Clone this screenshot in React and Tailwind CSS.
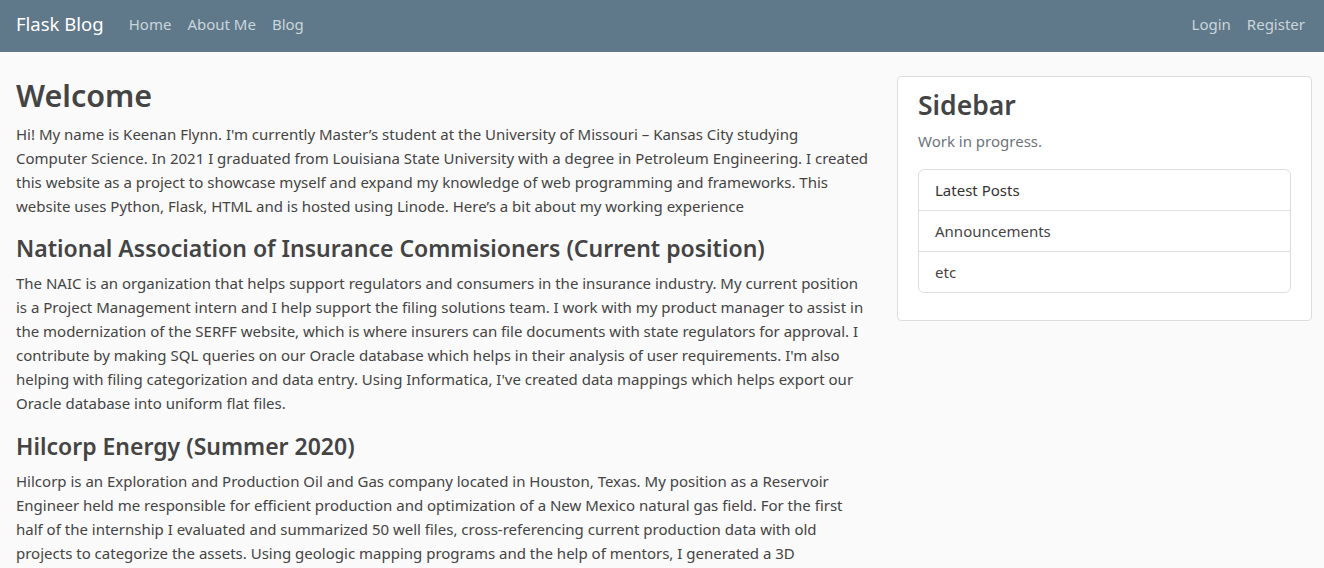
import React from "react";

const intro = [
  "Hi! My name is Keenan Flynn. I'm currently Master’s student at the University of Missouri – Kansas City studying",
  "Computer Science. In 2021 I graduated from Louisiana State University with a degree in Petroleum Engineering. I created",
  "this website as a project to showcase myself and expand my knowledge of web programming and frameworks. This",
  "website uses Python, Flask, HTML and is hosted using Linode. Here’s a bit about my working experience",
];

const naic = [
  "The NAIC is an organization that helps support regulators and consumers in the insurance industry. My current position",
  "is a Project Management intern and I help support the filing solutions team. I work with my product manager to assist in",
  "the modernization of the SERFF website, which is where insurers can file documents with state regulators for approval. I",
  "contribute by making SQL queries on our Oracle database which helps in their analysis of user requirements. I'm also",
  "helping with filing categorization and data entry. Using Informatica, I've created data mappings which helps export our",
  "Oracle database into uniform flat files.",
];

const hilcorp = [
  "Hilcorp is an Exploration and Production Oil and Gas company located in Houston, Texas. My position as a Reservoir",
  "Engineer held me responsible for efficient production and optimization of a New Mexico natural gas field. For the first",
  "half of the internship I evaluated and summarized 50 well files, cross-referencing current production data with old",
  "projects to categorize the assets. Using geologic mapping programs and the help of mentors, I generated a 3D",
];

const Lines = ({ lines }) => (
  <p className="mb-4">
    {lines.map((l, i) => (
      <span key={i} className="block whitespace-nowrap">
        {l}
      </span>
    ))}
  </p>
);

export default function App() {
  return (
    <div className="min-h-screen bg-[#fafafa] text-[#444444] font-['Noto_Sans',sans-serif] text-[15px] leading-6">
      {/* Navbar */}
      <nav className="h-[52px] bg-[#5f788a] flex items-center px-4 pb-[5px]">
        <span className="text-white text-[18.5px] mr-[25px]">Flask Blog</span>
        <div className="flex gap-4 text-[#cbd5db]">
          <span>Home</span>
          <span>About Me</span>
          <span>Blog</span>
        </div>
        <div className="ml-auto flex gap-4 text-[#cbd5db] pr-[3px]">
          <span>Login</span>
          <span>Register</span>
        </div>
      </nav>

      <main className="flex px-4 pt-6 gap-8">
        <div className="w-[849px] shrink-0">
          <h2 className="text-[30.5px] font-semibold leading-[38.4px] mb-2">Welcome</h2>
          <Lines lines={intro} />
          <h4 className="text-[23px] font-semibold leading-[29px] mb-2">
            National Association of Insurance Commisioners (Current position)
          </h4>
          <Lines lines={naic} />
          <h4 className="text-[23px] font-semibold leading-[30px] mb-2">Hilcorp Energy (Summer 2020)</h4>
          <Lines lines={hilcorp} />
        </div>

        {/* Sidebar */}
        <aside className="w-[415px] shrink-0">
          <div className="bg-white border border-[#dddddd] rounded px-5 pt-3 pb-[27px]">
            <h3 className="text-[26.5px] font-semibold leading-[33.6px] mb-[6px]">Sidebar</h3>
            <p className="text-[#6c757d] mb-4">Work in progress.</p>
            <ul className="border border-[#dddddd] rounded-md">
              <li className="px-4 py-2 border-b border-[#dddddd] text-[#333]">Latest Posts</li>
              <li className="px-4 py-2 border-b border-[#dddddd]">Announcements</li>
              <li className="px-4 py-2">etc</li>
            </ul>
          </div>
        </aside>
      </main>
    </div>
  );
}
